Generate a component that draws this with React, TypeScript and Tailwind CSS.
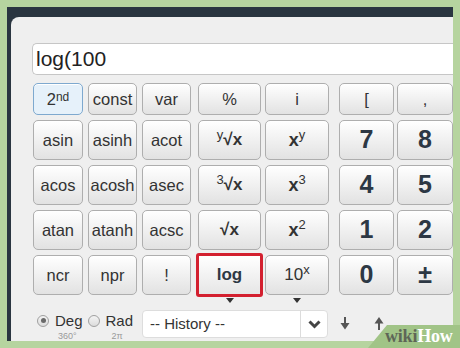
import React from "react";

type Cell = { label: React.ReactNode; kind?: "fn" | "num" | "blue" | "log" };

const rows: { h: string; cells: Cell[] }[] = [
  {
    h: "h-[32px]",
    cells: [
      { label: <>2<sup className="text-[12px] relative -top-[2px]">nd</sup></>, kind: "blue" },
      { label: "const" },
      { label: "var" },
      { label: "%" },
      { label: "i" },
      { label: "[" },
      { label: "," },
    ],
  },
  {
    h: "h-[40px]",
    cells: [
      { label: "asin" },
      { label: "asinh" },
      { label: "acot" },
      { label: <span className="font-bold text-[17px]"><sup className="text-[13px] font-normal">y</sup>√x</span> },
      { label: <span className="font-bold text-[18px]">x<sup className="text-[13px] font-normal">y</sup></span> },
      { label: "7", kind: "num" },
      { label: "8", kind: "num" },
    ],
  },
  {
    h: "h-[40px]",
    cells: [
      { label: "acos" },
      { label: "acosh" },
      { label: "asec" },
      { label: <span className="font-bold text-[17px]"><sup className="text-[13px] font-normal">3</sup>√x</span> },
      { label: <span className="font-bold text-[18px]">x<sup className="text-[13px] font-normal">3</sup></span> },
      { label: "4", kind: "num" },
      { label: "5", kind: "num" },
    ],
  },
  {
    h: "h-[40px]",
    cells: [
      { label: "atan" },
      { label: "atanh" },
      { label: "acsc" },
      { label: <span className="font-bold text-[17px]">√x</span> },
      { label: <span className="font-bold text-[18px]">x<sup className="text-[13px] font-normal">2</sup></span> },
      { label: "1", kind: "num" },
      { label: "2", kind: "num" },
    ],
  },
  {
    h: "h-[40px]",
    cells: [
      { label: "ncr" },
      { label: "npr" },
      { label: "!" },
      { label: "log", kind: "log" },
      { label: <span className="text-[17px]">10<sup className="text-[13px]">x</sup></span> },
      { label: "0", kind: "num" },
      { label: "±", kind: "num" },
    ],
  },
];

const widths = [
  "w-[50px]",
  "w-[49px] ml-[5px]",
  "w-[49px] ml-[5px]",
  "w-[63px] ml-[7px]",
  "w-[64px] ml-[4px]",
  "w-[55px] ml-[10px]",
  "w-[56px] ml-[3px] shrink-0",
];

function Key({ cell, w, h }: { cell: Cell; w: string; h: string }) {
  const base = `${w} ${h} flex items-center justify-center border shadow-[inset_0_1px_0_#ffffff]`;
  if (cell.kind === "blue") {
    return (
      <div className={`${base} rounded-[5px] border-[#7ea9cf] bg-[#e6f1fa] text-[16.5px] text-[#333]`}>
        {cell.label}
      </div>
    );
  }
  if (cell.kind === "num") {
    return (
      <div className={`${base} rounded-[5px] border-[#aeaeae] bg-linear-to-b from-[#ffffff] to-[#e2e2e2] text-[25px] font-bold text-[#2d3844]`}>
        {cell.label}
      </div>
    );
  }
  if (cell.kind === "log") {
    return (
      <div className={`${base} rounded-[1px] border-[#aeaeae] bg-linear-to-b from-[#ffffff] to-[#e6e6e6] text-[17px] font-bold text-[#2d3844] outline-[3px] outline-[#d3202f] -outline-offset-1`}>
        {cell.label}
      </div>
    );
  }
  return (
    <div className={`${base} rounded-[5px] border-[#aeaeae] bg-linear-to-b from-[#ffffff] to-[#e2e2e2] text-[16.5px] text-[#333]`}>
      {cell.label}
    </div>
  );
}

function Tri() {
  return <div className="w-0 h-0 border-l-[4px] border-r-[4px] border-t-[5px] border-l-transparent border-r-transparent border-t-[#333]" />;
}

function Radio({ on }: { on?: boolean }) {
  return (
    <div className="w-[12px] h-[12px] rounded-full border border-[#a0a0a0] bg-linear-to-b from-[#f4f4f4] to-[#dcdcdc] flex items-center justify-center">
      {on && <div className="w-[5px] h-[5px] rounded-full bg-[#6a6a6a]" />}
    </div>
  );
}

export default function App() {
  return (
    <div className="w-[460px] h-[348px] bg-[#b6d49f] relative overflow-hidden pt-[7px] pl-[7px] font-['Liberation_Sans',Arial,sans-serif]">
      <div className="w-[446px] h-[334px] bg-[#2a3540] pt-[10px] pl-[4px]">
        <div className="h-full bg-[#efefef] rounded-tl-[8px] pt-[26px] pl-[21px] overflow-hidden">
          {/* display */}
          <div className="h-[32px] rounded-l-[5px] border border-r-0 border-[#c6c6c6] bg-white flex items-center pl-[3px] text-[21px] text-[#222]">
            log(100
          </div>

          {/* keys */}
          <div className="mt-[8px] pl-[1px] flex flex-col gap-[5px]">
            {rows.map((r, ri) => (
              <div key={ri} className="flex">
                {r.cells.map((c, ci) => (
                  <Key key={ci} cell={c} w={widths[ci]} h={r.h} />
                ))}
              </div>
            ))}
          </div>

          {/* dropdown markers */}
          <div className="flex h-[10px] pl-[1px] pt-[3px]">
            <div className="w-[158px]" />
            <div className="w-[63px] ml-[7px] flex justify-center"><Tri /></div>
            <div className="w-[64px] ml-[4px] flex justify-center"><Tri /></div>
          </div>

          {/* bottom row */}
          <div className="flex items-start">
            <div className="w-[110px] flex pl-[5px] pt-[8px]">
              <div className="flex flex-col">
                <div className="flex items-center gap-[6px]">
                  <Radio on />
                  <span className="text-[15px] text-[#333] leading-none">Deg</span>
                </div>
                <span className="text-[9px] text-[#9a9a9a] leading-none ml-[21px] mt-[4px]">360°</span>
              </div>
              <div className="flex flex-col ml-[5px]">
                <div className="flex items-center gap-[6px]">
                  <Radio />
                  <span className="text-[15px] text-[#333] leading-none">Rad</span>
                </div>
                <span className="text-[9px] text-[#9a9a9a] leading-none ml-[24px] mt-[4px]">2π</span>
              </div>
            </div>
            <div className="w-[186px] h-[28px] mt-[5px] rounded-[4px] bg-white border border-[#dddddd] flex items-center">
              <span className="flex-1 pl-[7px] text-[15px] text-[#333]">-- History --</span>
              <div className="w-[27px] h-full border-l border-[#dcdcdc] flex items-center justify-center">
                <svg width="13" height="9" viewBox="0 0 13 9">
                  <polyline points="1.5,1.5 6.5,6.5 11.5,1.5" fill="none" stroke="#444" strokeWidth="3" />
                </svg>
              </div>
            </div>
            <div className="flex items-center mt-[12px] ml-[12px] gap-[24px]">
              <svg width="10" height="13" viewBox="0 0 10 13">
                <rect x="4" y="0" width="2" height="8" fill="#555" />
                <polygon points="0.5,6 9.5,6 5,12.5" fill="#555" />
              </svg>
              <svg width="10" height="13" viewBox="0 0 10 13">
                <polygon points="0.5,6.5 9.5,6.5 5,0" fill="#555" />
                <rect x="4" y="5" width="2" height="8" fill="#555" />
              </svg>
            </div>
          </div>
        </div>
      </div>

      {/* wikiHow mark */}
      <div className="absolute left-[368px] top-[325px] w-[92px] h-[23px]">
        <svg className="absolute inset-0" width="92" height="23" viewBox="0 0 92 23">
          <polygon points="19,0 92,0 92,23 0,23" fill="#a1c487" />
        </svg>
        <div className="absolute left-[17px] top-[2px] text-[18px] leading-[18px] font-bold font-['Liberation_Serif',serif] tracking-[-0.2px]">
          <span className="text-[#5e6657]">wiki</span>
          <span className="text-white">How</span>
        </div>
      </div>
    </div>
  );
}
